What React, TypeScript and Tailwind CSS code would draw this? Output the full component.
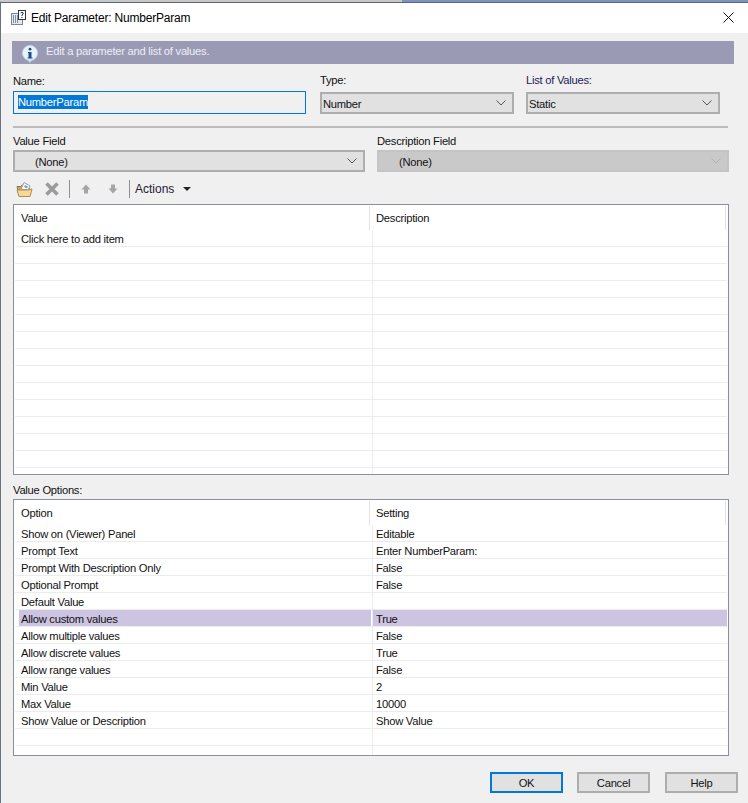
const F = "font-['Liberation_Sans',Arial,sans-serif]";

function Chevron({ color = "#555" }: { color?: string }) {
  return (
    <svg width="10" height="6" viewBox="0 0 10 6" className="shrink-0">
      <path d="M0.5 0.5 L5 5 L9.5 0.5" fill="none" stroke={color} strokeWidth="1" />
    </svg>
  );
}

function Select({ label, className, disabled, indent }: { label: string; className: string; disabled?: boolean; indent?: boolean }) {
  return (
    <div className={`h-[22px] border-2 flex items-center justify-between pr-[6px] ${disabled ? "border-[#c4c4c4] bg-[#c9c9c9]" : "border-[#aeaeae] bg-[#e1e1e1]"} ${indent ? "pl-[20px]" : "pl-[1px]"} ${className}`}>
      <span className="text-[#111] pt-[2px]">{label}</span>
      <Chevron color={disabled ? "#b0b0b0" : "#555"} />
    </div>
  );
}

function Row({ a, b, selected }: { a?: string; b?: string; selected?: boolean }) {
  return (
    <div className="flex h-[17px] border-b border-[#ececec] shrink-0">
      <div className={`w-[352px] pl-[2px] ml-[4px] leading-[18px] whitespace-nowrap ${selected ? "bg-[#cdc4e2]" : ""}`}>{a}</div>
      <div className={`flex-1 ml-[1px] border-l border-[#ececec] pl-[3px] leading-[18px] whitespace-nowrap ${selected ? "bg-[#cdc4e2]" : ""}`}>{b}</div>
    </div>
  );
}

function Grid({ h1, h2, rows, className }: { h1: string; h2: string; rows: { a?: string; b?: string; selected?: boolean }[]; className: string }) {
  return (
    <div className={`border-[1.5px] border-[#8a909c] bg-white pt-[1px] pl-[1px] pr-[1px] flex flex-col overflow-hidden ${className}`}>
      <div className="flex h-[24px] shrink-0">
        <div className="w-[355px] pl-[6px] pt-[4px] border-r border-[#e3e3e3]">{h1}</div>
        <div className="flex-1 pl-[6px] pt-[4px] border-r border-[#e3e3e3] mr-[1px]">{h2}</div>
      </div>
      {rows.map((r, i) => (
        <Row key={i} {...r} />
      ))}
    </div>
  );
}

const options = [
  { a: "Show on (Viewer) Panel", b: "Editable" },
  { a: "Prompt Text", b: "Enter NumberParam:" },
  { a: "Prompt With Description Only", b: "False" },
  { a: "Optional Prompt", b: "False" },
  { a: "Default Value", b: "" },
  { a: "Allow custom values", b: "True", selected: true },
  { a: "Allow multiple values", b: "False" },
  { a: "Allow discrete values", b: "True" },
  { a: "Allow range values", b: "False" },
  { a: "Min Value", b: "2" },
  { a: "Max Value", b: "10000" },
  { a: "Show Value or Description", b: "Show Value" },
  {},
  {},
];

function Btn({ label, primary }: { label: string; primary?: boolean }) {
  return (
    <div className={`h-[21px] w-[73px] shrink-0 flex items-center justify-center pt-[1px] bg-[#e1e1e1] border-2 ${primary ? "border-[#0078d7]" : "border-[#adadad]"}`}>{label}</div>
  );
}

export default function App() {
  return (
    <div className={`${F} w-[748px] h-[803px] bg-[#f0f0f0] text-[11.2px] tracking-[-0.25px] text-[#111] overflow-hidden flex flex-col`}>
      <div className="h-[2px] flex shrink-0">
        <div className="w-[402px] bg-[#c8c8c8]" />
        <div className="flex-1 bg-[#7a93bd]" />
      </div>
      <div className="h-[1px] bg-[#5f6672] shrink-0" />
      <div className="flex flex-col flex-1 border-l border-[#6b7280]">
        <div className="h-[30px] bg-white flex items-center shrink-0 pl-[10px] pr-[14px] text-[12px] tracking-[-0.2px] text-black">
          <svg width="15" height="15" viewBox="0 0 15 15" className="mr-[5px] mb-[1px]">
            <rect x="0.5" y="3.5" width="11" height="11" fill="#dfe9f2" stroke="#7b8794" />
            <path d="M2 6h1M4 6h1M6 6h1M2 8h1M4 8h1M6 8h1M2 10h1M4 10h1M6 10h1M2 12h1M4 12h1M6 12h1" stroke="#2f3a4a" />
            <rect x="7.5" y="0.5" width="7" height="9" fill="#fff" stroke="#333" />
            <path d="M9.7 3 Q11 1.6 12.3 3 Q12.3 4.3 11 5 V6 M11 7 V8" fill="none" stroke="#1a2a66" />
          </svg>
          <span>Edit Parameter: NumberParam</span>
          <svg width="11" height="11" viewBox="0 0 11 11" className="ml-auto mb-[2px]">
            <path d="M0.5 0.5 L10.5 10.5 M10.5 0.5 L0.5 10.5" stroke="#111" strokeWidth="1" />
          </svg>
        </div>
        <div className="pl-[11px] pr-[13px] pt-[8px] flex flex-col flex-1">
          <div className="h-[23px] w-[722px] bg-[#9a9ab5] flex items-center pl-[10px] text-[#eeeef4] shrink-0">
            <svg width="16" height="18" viewBox="0 0 16 18" className="mr-[8px] mt-[2px]">
              <circle cx="8" cy="8" r="7.5" fill="#e9f3fb" stroke="#c4d9ea" />
              <path d="M5 14 L8 18 L10 14 Z" fill="#cfe2f2" />
              <circle cx="8" cy="4.2" r="1.4" fill="#1c4f8a" />
              <path d="M6 7 H9.5 V12.5 H10.5 V13.5 H5.5 V12.5 H6.5 V8 H6 Z" fill="#1c4f8a" />
            </svg>
            <span className="mb-[3px]">Edit a parameter and list of values.</span>
          </div>
          <div className="flex mt-[9px] h-[41px] ml-[1px]">
            <div className="w-[307px] flex flex-col">
              <div className="h-[18px] leading-[17px]">Name:</div>
              <div className="w-[293px] h-[23px] border border-[#0078d7] flex items-center pl-[4px] pb-[2px]">
                <span className="bg-[#0078d7] text-white leading-[14px]">NumberParam</span>
              </div>
            </div>
            <div className="w-[206px] flex flex-col">
              <div className="h-[20px] leading-[17px] -mt-[1px]">Type:</div>
              <Select label="Number" className="w-[194px] mt-[3px]" />
            </div>
            <div className="w-[194px] flex flex-col">
              <div className="h-[20px] leading-[17px] -mt-[1px] text-[#1a1a5a]">List of Values:</div>
              <Select label="Static" className="w-[194px] mt-[3px]" />
            </div>
          </div>
          <div className="h-[2px] bg-[#bcbcbc] w-[715px] ml-[1px] mt-[12px] shrink-0" />
          <div className="flex ml-[1px] mt-[5px]">
            <div className="w-[364px] flex flex-col">
              <div className="h-[17px]">Value Field</div>
              <Select label="(None)" indent className="w-[352px]" />
            </div>
            <div className="w-[352px] flex flex-col">
              <div className="h-[17px]">Description Field</div>
              <Select label="(None)" indent disabled className="w-[352px]" />
            </div>
          </div>
          <div className="h-[22px] mt-[6px] flex items-center ml-[4px] shrink-0">
            <svg width="17" height="17" viewBox="0 0 17 17" className="shrink-0">
              <path d="M1 5.5 L5 5.5 L6 4 L8 4 L14 8 L14 15 L3 15 Z" fill="#d9a24c" stroke="#8f7a4c" />
              <path d="M5 8 L8 1.5 L14 5 L12 9 Z" fill="#fff" stroke="#8fa0b8" />
              <path d="M9 4 L12 5.5 L11 7.5 L8 6 Z" fill="#7f9cc4" />
              <path d="M1 9 L12 9 L16 8 L14 15.5 L3 15.5 Z" fill="#f8d896" stroke="#b08f4c" />
            </svg>
            <svg width="14" height="14" viewBox="0 0 14 14" className="ml-[12px] shrink-0">
              <path d="M1.5 1.5 L12.5 12.5 M12.5 1.5 L1.5 12.5" stroke="#9b9b9b" strokeWidth="3.6" />
            </svg>
            <div className="w-[1px] h-[18px] bg-[#8f8f8f] ml-[10px]" />
            <svg width="10" height="10" viewBox="0 0 10 10" className="ml-[11px]">
              <path d="M5 0.5 L9.5 5.5 L7 5.5 L7 9.5 L3 9.5 L3 5.5 L0.5 5.5 Z" fill="#a5a5a5" />
            </svg>
            <svg width="10" height="10" viewBox="0 0 10 10" className="ml-[17px]">
              <path d="M5 9.5 L9.5 4.5 L7 4.5 L7 0.5 L3 0.5 L3 4.5 L0.5 4.5 Z" fill="#a5a5a5" />
            </svg>
            <div className="w-[1px] h-[18px] bg-[#8f8f8f] ml-[11px]" />
            <span className="ml-[5px] text-[12px] tracking-[0px] text-[#223]">Actions</span>
            <svg width="8" height="4" viewBox="0 0 8 4" className="ml-[9px]">
              <path d="M0 0 H8 L4 4 Z" fill="#222" />
            </svg>
          </div>
          <Grid
            h1="Value"
            h2="Description"
            className="h-[271px] w-[716px] ml-[1px] mt-[4px] shrink-0"
            rows={[{ a: "Click here to add item" }, ...Array.from({ length: 14 }, () => ({}))]}
          />
          <div className="ml-[1px] mt-[7px] h-[17px] shrink-0">Value Options:</div>
          <Grid h1="Option" h2="Setting" rows={options} className="h-[257px] w-[716px] ml-[1px] shrink-0" />
          <div className="flex mt-[16px] ml-[478px]">
            <Btn label="OK" primary />
            <div className="w-[14px] shrink-0" />
            <Btn label="Cancel" />
            <div className="w-[15px] shrink-0" />
            <Btn label="Help" />
          </div>
        </div>
      </div>
    </div>
  );
}
